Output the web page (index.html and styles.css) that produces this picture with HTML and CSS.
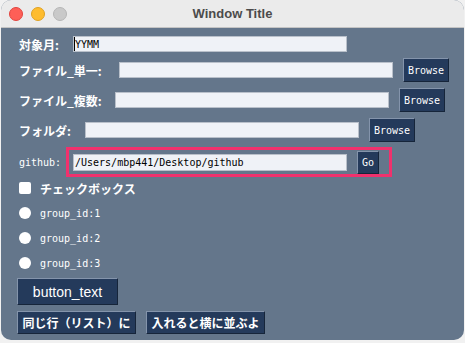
FILE: index.html
```html
<!DOCTYPE html>
<html lang="ja">
  <head>
    <meta charset="UTF-8" />
    <meta name="viewport" content="width=device-width, initial-scale=1.0" />
    <title>Window Title</title>
    <link rel="stylesheet" href="styles.css">
  </head>
  <body>
    <div class="window">
      <div class="titlebar">
        <div class="lights">
          <span class="light red"></span>
          <span class="light yellow"></span>
          <span class="light gray"></span>
        </div>
        <div class="title">Window Title</div>
      </div>

      <div class="content">
        <div class="row row-month">
          <label class="label w-month">対象月:</label>
          <div class="field"><span class="caret"></span>YYMM</div>
        </div>

        <div class="row row-single">
          <label class="label w-single">ファイル_単一:</label>
          <div class="field"></div>
          <button class="btn browse">Browse</button>
        </div>

        <div class="row row-multi">
          <label class="label w-multi">ファイル_複数:</label>
          <div class="field"></div>
          <button class="btn browse">Browse</button>
        </div>

        <div class="row row-folder">
          <label class="label w-folder">フォルダ:</label>
          <div class="field"></div>
          <button class="btn browse">Browse</button>
        </div>

        <div class="row row-github">
          <label class="label mono w-github">github:</label>
          <div class="frame">
            <div class="field mono-field">/Users/mbp441/Desktop/github</div>
            <button class="btn go">Go</button>
          </div>
        </div>

        <div class="check-row">
          <span class="checkbox"></span>
          <span class="check-label">チェックボックス</span>
        </div>

        <div class="radio-row">
          <span class="radio"></span>
          <span class="mono">group_id:1</span>
        </div>
        <div class="radio-row">
          <span class="radio"></span>
          <span class="mono">group_id:2</span>
        </div>
        <div class="radio-row">
          <span class="radio"></span>
          <span class="mono">group_id:3</span>
        </div>

        <button class="btn big">button_text</button>

        <div class="btn-row">
          <button class="btn wide">同じ行（リスト）に</button>
          <button class="btn wide">入れると横に並ぶよ</button>
        </div>
      </div>
    </div>
  </body>
</html>
```

FILE: styles.css
```css
body {
  margin: 0;
  background: #f1f1f1;
  font-family: "Noto Sans CJK JP", "Liberation Sans", sans-serif;
}

.window {
  width: 463px;
  height: 340px;
  margin-left: 1px;
  border-radius: 10px;
  overflow: hidden;
  background: #64768b;
}

.titlebar {
  height: 27px;
  background: #ebebeb;
  border-bottom: 1px solid #c4c4c4;
  display: flex;
  align-items: center;
  position: relative;
}

.lights {
  display: flex;
  gap: 8px;
  padding-left: 8px;
}

.light {
  width: 12px;
  height: 12px;
  border-radius: 50%;
}

.red {
  background: #fe5f57;
  border: 0.5px solid #e0443e;
}

.yellow {
  background: #febc2e;
  border: 0.5px solid #dea123;
}

.gray {
  background: #c9c9c9;
  border: 0.5px solid #b5b5b5;
}

.title {
  position: absolute;
  left: 0;
  right: 0;
  text-align: center;
  font-family: "Liberation Sans", sans-serif;
  font-weight: bold;
  font-size: 13px;
  color: #4b4b4b;
}

.content {
  padding: 4px 0 0 16px;
}

.row {
  display: flex;
  align-items: center;
  height: 24px;
}

.row-single {
  margin-top: 2px;
}

.row-multi,
.row-folder {
  margin-top: 6px;
}

.row-github {
  margin-top: 5px;
  height: 30px;
}

.label {
  padding-left: 2px;
  box-sizing: border-box;
  color: #fff;
  font-size: 12px;
  font-weight: bold;
  white-space: nowrap;
}

.w-month { width: 56px; }
.w-single { width: 102px; }
.w-multi { width: 98px; }
.w-folder { width: 68px; }
.w-github { width: 49px; }

.mono {
  font-family: "DejaVu Sans Mono", monospace;
  font-size: 10px;
  font-weight: normal;
  color: #fff;
}

.field {
  width: 274px;
  height: 16px;
  box-sizing: border-box;
  background: #eff2f7;
  border: 1px solid #b9c0ca;
  display: flex;
  align-items: center;
  font-family: "DejaVu Sans Mono", monospace;
  font-size: 10px;
  color: #000;
}

.caret {
  width: 1px;
  height: 14px;
  background: #000;
}

.mono-field {
  height: 17px;
  padding-left: 1px;
}

.frame {
  display: flex;
  align-items: center;
  width: 326px;
  height: 30px;
  box-sizing: border-box;
  border: 3px solid #f0316d;
  padding-left: 4px;
}

.btn {
  background: #243a5b;
  color: #fff;
  border: 1px solid;
  border-color: #8494ab #16253a #16253a #8494ab;
  padding: 0;
  margin: 0;
  box-sizing: border-box;
  cursor: pointer;
}

.browse,
.go {
  margin-left: 10px;
  height: 24px;
  font-family: "DejaVu Sans Mono", monospace;
  font-size: 10px;
}

.browse {
  width: 46px;
}

.go {
  width: 22px;
  height: 23px;
}

.check-row,
.radio-row {
  display: flex;
  align-items: center;
  gap: 9px;
  height: 14px;
  padding-left: 2px;
}

.check-row {
  margin-top: 4px;
}

.radio-row {
  margin-top: 11px;
}

.checkbox {
  width: 12px;
  height: 12px;
  background: #fff;
  border-radius: 2px;
}

.radio {
  width: 12px;
  height: 12px;
  background: #fff;
  border-radius: 50%;
}

.check-label {
  color: #fff;
  font-size: 12px;
  font-weight: bold;
}

.big {
  display: block;
  margin-top: 8px;
  width: 101px;
  height: 27px;
  font-family: "Liberation Sans", sans-serif;
  font-size: 14px;
}

.btn-row {
  display: flex;
  gap: 10px;
  margin-top: 6px;
}

.wide {
  width: 119px;
  height: 23px;
  font-family: "Noto Sans CJK JP", sans-serif;
  font-size: 12px;
  font-weight: bold;
}
```
